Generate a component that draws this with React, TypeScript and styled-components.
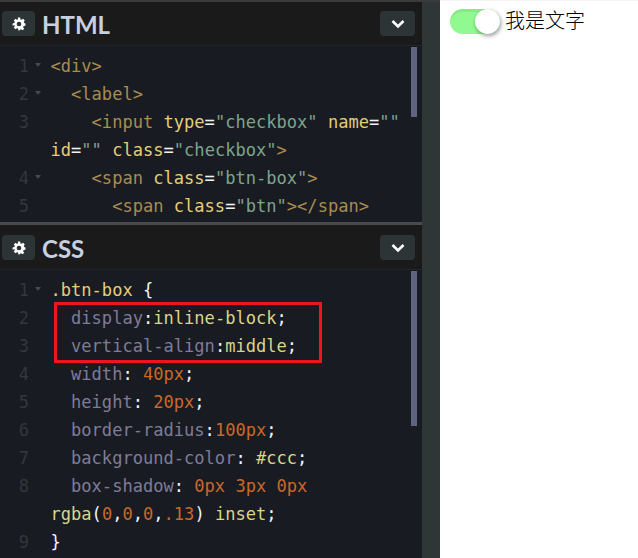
import React from "react";
import styled, { createGlobalStyle } from "styled-components";

const Global = createGlobalStyle`
  html, body { margin: 0; padding: 0; background: #fff; }
  body { width: 638px; height: 558px; overflow: hidden; }
`;

const Page = styled.div`
  display: flex;
  width: 638px;
  height: 558px;
  overflow: hidden;
`;
const Editors = styled.div`
  display: flex;
  flex-direction: column;
  width: 422px;
  height: 558px;
  background: #1a1a1a;
  border-top: 1px solid #3b3b3b;
  box-sizing: border-box;
`;
const Resizer = styled.div`
  width: 18px;
  height: 558px;
  background: #2f3636;
  border-top: 2px solid #3b3b3b;
  box-sizing: border-box;
`;
const Preview = styled.div`
  flex: 1;
  display: flex;
  align-items: flex-start;
  padding: 8px 0 0 10px;
  background: #fff;
  border-top: 1px solid #f4f4f4;
  box-sizing: border-box;
`;
const Divider = styled.div`
  height: 3px;
  background: #4a4a4a;
  flex: none;
`;
const Header = styled.div<{ $first?: boolean }>`
  display: flex;
  align-items: center;
  height: 45px;
  padding: ${(p) => (p.$first ? "0" : "1px")} 7px 0 2px;
  box-sizing: border-box;
  background: #1a1a1a;
  border-top: ${(p) => (p.$first ? "1px solid #3b3b3b" : "0")};
  border-bottom: 1px solid #20242a;
  flex: none;
`;
const IconButton = styled.div`
  display: flex;
  align-items: center;
  justify-content: center;
  width: 33px;
  height: 25px;
  border-radius: 4px;
  background: #2c3436;
  color: #fff;
`;
const Title = styled.div`
  flex: 1;
  margin: 2px 0 0 7px;
  font-family: Lato, sans-serif;
  font-weight: 700;
  font-size: 24px;
  color: #c7cfe0;
  line-height: 25px;
`;
const Collapse = styled(IconButton)`
  width: 35px;
`;
const Code = styled.div<{ $height?: string }>`
  position: relative;
  height: ${(p) => p.$height ?? "auto"};
  flex: ${(p) => (p.$height ? "none" : "1")};
  padding-top: 6px;
  box-sizing: border-box;
  background: #181b21;
  overflow: hidden;
  font-family: "DejaVu Sans Mono", monospace;
  font-size: 17.07px;
  line-height: 28px;
`;
const Thumb = styled.div<{ $h: number }>`
  position: absolute;
  top: 1px;
  left: 411px;
  width: 6px;
  height: ${(p) => p.$h}px;
  background: #5f6580;
`;
const Row = styled.div`
  display: grid;
  grid-template-columns: 29px 21.5px 358px;
`;
const Num = styled.div`
  text-align: right;
  color: #34373c;
  font-size: 17px;
`;
const Fold = styled.div`
  position: relative;
  &::after {
    content: "";
    position: absolute;
    top: 11px;
    left: 6px;
    border-left: 3px solid transparent;
    border-right: 3px solid transparent;
    border-top: 4px solid #45484d;
  }
`;
const NoFold = styled.div``;
const Text = styled.div`
  white-space: pre-wrap;
  word-break: normal;
  color: #d8c98a;
`;
const Tag = styled.span`color: #a88c52;`;
const Attr = styled.span`color: #e5cd7a;`;
const Str = styled.span`color: #7da58c;`;
const Eq = styled.span`color: #f2f2f2;`;
const Sel = styled.span`color: #e5cd7a;`;
const Prop = styled.span`color: #7f7c98;`;
const Val = styled.span`color: #d9d58a;`;
const NumV = styled.span`color: #c9682a;`;
const Pun = styled.span`color: #f0f4ff;`;
const Mark = styled.div`
  position: absolute;
  top: 32px;
  left: 54px;
  width: 268px;
  height: 61px;
  border: 3px solid #f0141e;
  box-sizing: border-box;
`;
const Toggle = styled.div`
  position: relative;
  width: 50px;
  height: 25px;
  flex: none;
  border-radius: 13px;
  background: #90f98f;
  box-shadow: inset 0 3px 0 rgba(0, 0, 0, 0.06);
`;
const Knob = styled.div`
  position: absolute;
  right: 0;
  top: 0;
  width: 25px;
  height: 25px;
  border-radius: 50%;
  background: #fff;
  box-shadow: 1px 2px 4px rgba(0, 0, 0, 0.4);
`;
const Label = styled.span`
  margin-left: 5px;
  font-family: "Noto Sans CJK SC", sans-serif;
  font-weight: 300;
  font-size: 20px;
  line-height: 22px;
  color: #000;
`;

const Gear = () => (
  <svg width="14" height="14" viewBox="0 0 24 24" fill="#fff">
    <path fillRule="evenodd" d="M10 1h4l.6 3.1 1.9.8 2.6-1.8 2.8 2.8-1.8 2.6.8 1.9L23 11v4l-3.1.6-.8 1.9 1.8 2.6-2.8 2.8-2.6-1.8-1.9.8L13 23h-2l-.6-3.1-1.9-.8-2.6 1.8-2.8-2.8 1.8-2.6-.8-1.9L1 15v-4l3.1-.6.8-1.9-1.8-2.6 2.8-2.8 2.6 1.8 1.9-.8L10 1Zm2 7a4 4 0 1 0 0 8 4 4 0 0 0 0-8Z" />
  </svg>
);
const Chevron = () => (
  <svg width="14" height="10" viewBox="0 0 14 10" fill="none" stroke="#fff" strokeWidth="2.6">
    <path d="M1.5 2 7 7.5 12.5 2" />
  </svg>
);

const Line = ({ n, fold, children }: { n?: number; fold?: boolean; children: React.ReactNode }) => (
  <Row>
    <Num>{n}</Num>
    {fold ? <Fold /> : <NoFold />}
    <Text>{children}</Text>
  </Row>
);

const Head = ({ title, first }: { title: string; first?: boolean }) => (
  <Header $first={first}>
    <IconButton><Gear /></IconButton>
    <Title>{title}</Title>
    <Collapse><Chevron /></Collapse>
  </Header>
);

export default function App() {
  return (
    <Page>
      <Global />
      <Editors>
        <Head title="HTML" first />
        <Code $height="176px">
          <Thumb $h={70} />
          <Line n={1} fold><Tag>&lt;div&gt;</Tag></Line>
          <Line n={2} fold><Tag>  &lt;label&gt;</Tag></Line>
          <Line n={3}>
            <Tag>    &lt;input </Tag><Attr>type</Attr><Eq>=</Eq><Str>"checkbox"</Str> <Attr>name</Attr><Eq>=</Eq><Str>""</Str> <Attr>id</Attr><Eq>=</Eq><Str>""</Str> <Attr>class</Attr><Eq>=</Eq><Str>"checkbox"</Str><Tag>&gt;</Tag>
          </Line>
          <Line n={4} fold>
            <Tag>    &lt;span </Tag><Attr>class</Attr><Eq>=</Eq><Str>"btn-box"</Str><Tag>&gt;</Tag>
          </Line>
          <Line n={5}>
            <Tag>      &lt;span </Tag><Attr>class</Attr><Eq>=</Eq><Str>"btn"</Str><Tag>&gt;&lt;/span&gt;</Tag>
          </Line>
        </Code>
        <Divider />
        <Head title="CSS" />
        <Code>
          <Thumb $h={155} />
          <Mark />
          <Line n={1} fold><Sel>.btn-box</Sel> <Pun>{"{"}</Pun></Line>
          <Line n={2}><Prop>  display</Prop><Pun>:</Pun><Val>inline-block</Val><Pun>;</Pun></Line>
          <Line n={3}><Prop>  vertical-align</Prop><Pun>:</Pun><Val>middle</Val><Pun>;</Pun></Line>
          <Line n={4}><Prop>  width</Prop><Pun>: </Pun><NumV>40px</NumV><Pun>;</Pun></Line>
          <Line n={5}><Prop>  height</Prop><Pun>: </Pun><NumV>20px</NumV><Pun>;</Pun></Line>
          <Line n={6}><Prop>  border-radius</Prop><Pun>:</Pun><NumV>100px</NumV><Pun>;</Pun></Line>
          <Line n={7}><Prop>  background-color</Prop><Pun>: </Pun><Val>#ccc</Val><Pun>;</Pun></Line>
          <Line n={8}>
            <Prop>  box-shadow</Prop><Pun>: </Pun><NumV>0px</NumV> <NumV>3px</NumV> <NumV>0px</NumV> <Val>rgba</Val><Pun>(</Pun><NumV>0</NumV><Pun>,</Pun><NumV>0</NumV><Pun>,</Pun><NumV>0</NumV><Pun>,</Pun><NumV>.13</NumV><Pun>)</Pun> <Val>inset</Val><Pun>;</Pun>
          </Line>
          <Line n={9}><Pun>{"}"}</Pun></Line>
        </Code>
      </Editors>
      <Resizer />
      <Preview>
        <Toggle><Knob /></Toggle>
        <Label>我是文字</Label>
      </Preview>
    </Page>
  );
}
